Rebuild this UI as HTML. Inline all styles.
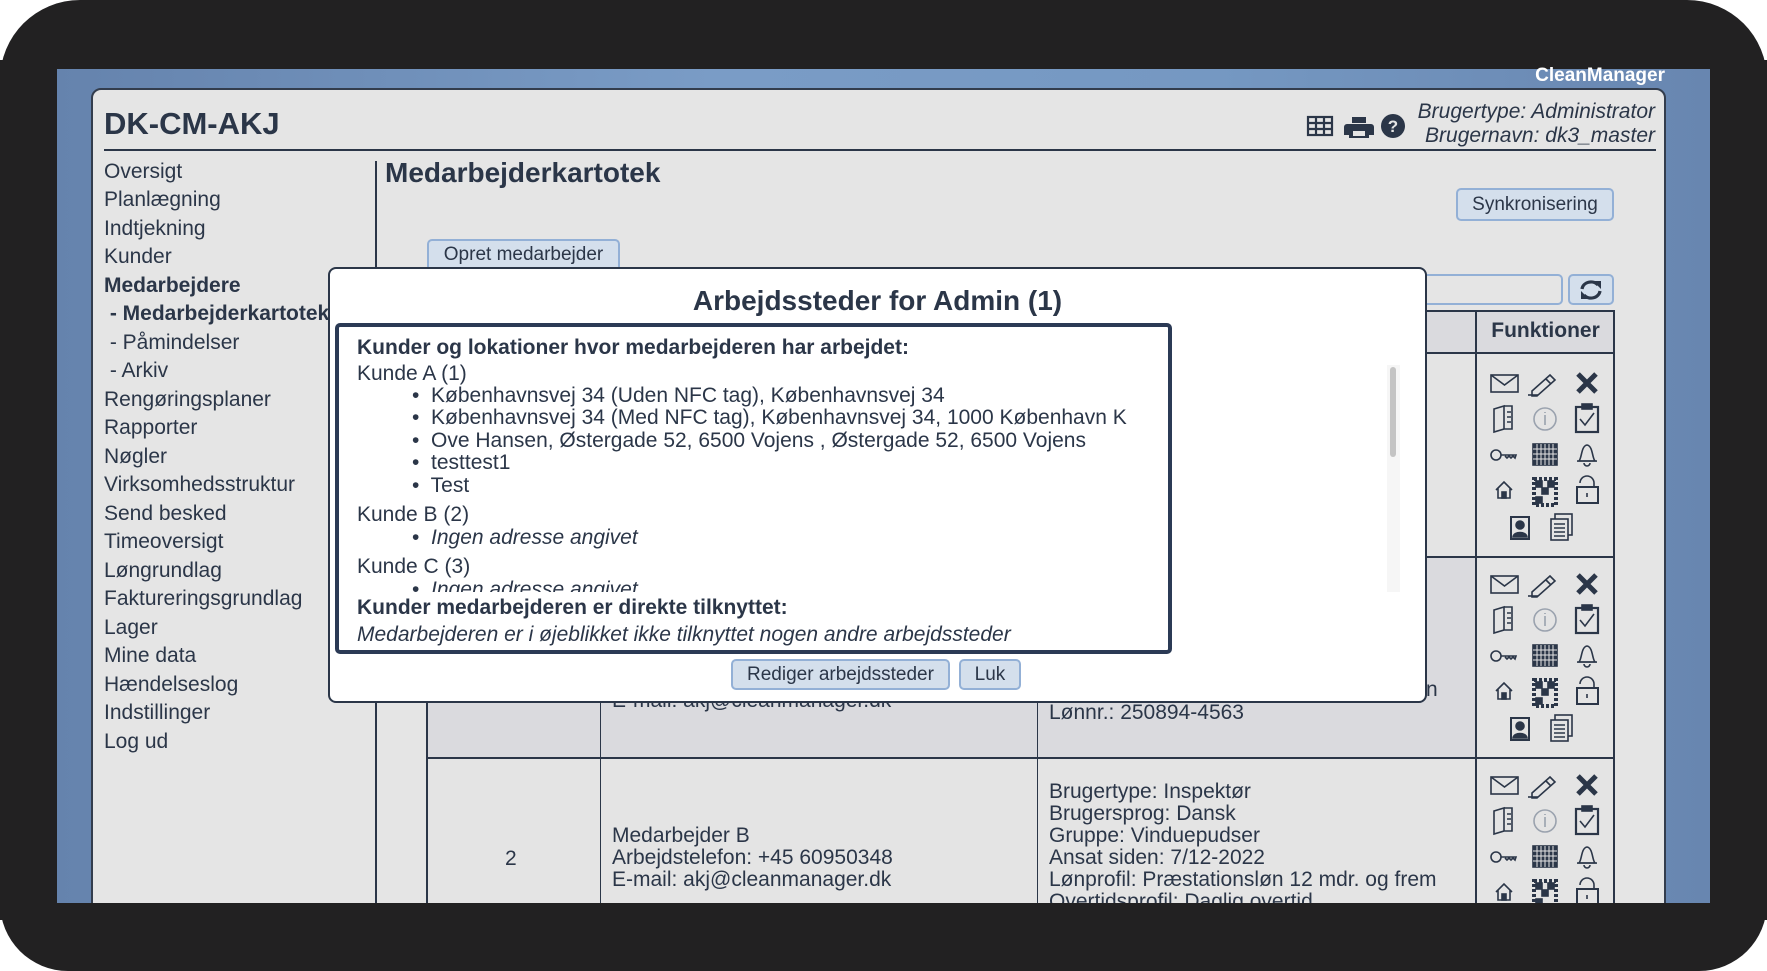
<!DOCTYPE html>
<html><head><meta charset="utf-8"><style>
*{margin:0;padding:0;box-sizing:border-box}
body{width:1767px;height:971px;background:#fff;overflow:hidden;font-family:"Liberation Sans",sans-serif;color:#2b3648;position:relative}
.frame{position:absolute;left:0;top:0;width:1767px;height:971px;background:#222122;border-radius:80px}
.blue{position:absolute;left:57px;top:69px;width:1653px;height:834px;background:linear-gradient(90deg,#6583ad 0%,#7a9cc6 40%,#7598c2 70%,#6886b0 100%);overflow:hidden}
.abs{position:absolute}
.panel{position:absolute;left:34px;top:19px;width:1575px;height:900px;background:#e5e5e5;border:2px solid #333d4d;border-radius:10px 10px 0 0}
.side div{position:absolute;left:104px;font-size:21px;white-space:nowrap}
.btn{position:absolute;background:#d4dfec;border:2px solid #93b0d6;border-radius:5px;font-size:19px;text-align:center;color:#2b3648}
.t{position:absolute;font-size:21px;white-space:nowrap}
</style></head><body>
<div class="frame"></div>
<div class="blue">
 <div class="panel"></div>
</div>
<div class="abs" style="right:102px;top:65px;font-size:19px;font-weight:bold;color:#fff">CleanManager</div>
<div class="abs" style="left:104px;top:106px;font-size:31px;font-weight:bold">DK-CM-AKJ</div>
<div class="abs" style="left:104px;top:149px;width:1552px;height:2px;background:#2b3648"></div>
<svg class="abs" style="left:1306px;top:113px" width="104" height="26" viewBox="0 0 104 26">
 <g fill="none" stroke="#2b3648" stroke-width="2.2"><rect x="2" y="4" width="24" height="18"/><path d="M2 10H26M2 16H26M10 4V22M18 4V22"/></g>
 <path d="M46 4h14v6h-14z M41 11h24a3 3 0 0 1 3 3v8h-5v3h-20v-3h-5v-8a3 3 0 0 1 3-3z" fill="#2b3648"/><rect x="47" y="18" width="12" height="5" fill="#e5e5e5"/>
 <circle cx="87" cy="13" r="12" fill="#2b3648"/><text x="87" y="19" font-size="17" font-weight="bold" fill="#e5e5e5" text-anchor="middle" font-family="Liberation Sans">?</text>
</svg>
<div class="abs" style="right:112px;top:100px;font-size:21px;font-style:italic;text-align:right;line-height:24px">Brugertype: Administrator<br>Brugernavn: dk3_master</div>
<div class="abs" style="left:375px;top:161px;width:2px;height:742px;background:#2b3648"></div>
<div class="side">
<div style="top:160px">Oversigt</div>
<div style="top:188px">Planlægning</div>
<div style="top:217px">Indtjekning</div>
<div style="top:245px">Kunder</div>
<div style="top:274px;font-weight:bold">Medarbejdere</div>
<div style="top:302px;font-weight:bold">&nbsp;- Medarbejderkartotek</div>
<div style="top:331px">&nbsp;- Påmindelser</div>
<div style="top:359px">&nbsp;- Arkiv</div>
<div style="top:388px">Rengøringsplaner</div>
<div style="top:416px">Rapporter</div>
<div style="top:445px">Nøgler</div>
<div style="top:473px">Virksomhedsstruktur</div>
<div style="top:502px">Send besked</div>
<div style="top:530px">Timeoversigt</div>
<div style="top:559px">Løngrundlag</div>
<div style="top:587px">Faktureringsgrundlag</div>
<div style="top:616px">Lager</div>
<div style="top:644px">Mine data</div>
<div style="top:673px">Hændelseslog</div>
<div style="top:701px">Indstillinger</div>
<div style="top:730px">Log ud</div>
</div>
<div class="abs" style="left:385px;top:157px;font-size:28px;font-weight:bold">Medarbejderkartotek</div>
<div class="btn" style="left:1456px;top:188px;width:158px;height:33px;line-height:29px">Synkronisering</div>
<div class="btn" style="left:427px;top:239px;width:193px;height:34px;line-height:28px">Opret medarbejder</div>
<div class="abs" style="left:1400px;top:274px;width:163px;height:31px;background:#e5e5e5;border:2px solid #93b0d6;border-radius:5px"></div>
<div class="btn" style="left:1568px;top:274px;width:46px;height:31px"><svg width="26" height="24" viewBox="0 0 26 24" style="margin-top:2px"><g fill="none" stroke="#2b3648" stroke-width="3.2"><path d="M4 11a9 8 0 0 1 16-4"/><path d="M22 13a9 8 0 0 1-16 4"/></g><path d="M15 3h8v8z M11 21h-8v-8z" fill="#2b3648"/></svg></div>
<div class="abs" style="left:426px;top:310px;width:1189px;height:600px;border:2px solid #2b3648;background:#e4e4e4"></div>
<div class="abs" style="left:428px;top:312px;width:1185px;height:41px;background:#dadade"></div>
<div class="abs" style="left:428px;top:557px;width:1048px;height:201px;background:#dadade"></div>
<div class="abs" style="left:426px;top:352px;width:1189px;height:2px;background:#2b3648"></div>
<div class="abs" style="left:426px;top:556px;width:1189px;height:2px;background:#2b3648"></div>
<div class="abs" style="left:426px;top:757px;width:1189px;height:2px;background:#2b3648"></div>
<div class="abs" style="left:600px;top:310px;width:1px;height:600px;background:#2b3648"></div>
<div class="abs" style="left:1037px;top:310px;width:1px;height:600px;background:#2b3648"></div>
<div class="abs" style="left:1475px;top:310px;width:2px;height:600px;background:#2b3648"></div>
<div class="abs" style="left:1476px;top:319px;width:139px;text-align:center;font-size:21px;font-weight:bold">Funktioner</div>
<div class="t" style="left:612px;top:689px">E-mail: akj@cleanmanager.dk</div>
<div class="t" style="left:1049px;top:701px">Lønnr.: 250894-4563</div>
<div class="t" style="left:1426px;top:678px">n</div>
<div class="t" style="left:505px;top:847px">2</div>
<div class="t" style="left:612px;top:825px;line-height:22px">Medarbejder B<br>Arbejdstelefon: +45 60950348<br>E-mail: akj@cleanmanager.dk</div>
<div class="t" style="left:1049px;top:781px;line-height:22px">Brugertype: Inspektør<br>Brugersprog: Dansk<br>Gruppe: Vinduepudser<br>Ansat siden: 7/12-2022<br>Lønprofil: Præstationsløn 12 mdr. og frem<br>Overtidsprofil: Daglig overtid</div>
<svg width="0" height="0" style="position:absolute"><defs>
<g id="ig" fill="none" stroke="#2b3648" stroke-width="1.6">
 <rect x="15" y="20" width="27" height="17"/><path d="M15 20l13.5 10 13.5-10"/>
 <path d="M56 36l18-16 5 5-18 16h-5z M70 24l5 5"/><path d="M52 40h10"/>
 <path d="M102 19l18 18M120 19l-18 18" stroke-width="5"/>
 <path d="M18 54l10-3v23l-10 3z M28 51h8v23h-8 M31 57h4M31 62h4M31 67h4"/>
 <circle cx="69" cy="64" r="11" stroke="#9aa2ae"/><path d="M69 60v10M69 57v1" stroke="#9aa2ae"/>
 <rect x="100" y="52" width="22" height="25" stroke-width="2.2"/><rect x="106" y="49" width="10" height="5" fill="#2b3648"/><path d="M104 64l5 6 9-12"/>
 <circle cx="20" cy="100" r="5"/><path d="M25 100h15l-1 3-2-2-2 2-2-2-2 2-2-2"/>
 <rect x="57" y="89" width="24" height="21" fill="#2b3648"/><path d="M57 94h24M57 99h24M57 104h24M61 89v21M65 89v21M69 89v21M73 89v21M77 89v21" stroke="#e4e4e4" stroke-width="1"/>
 <path d="M103 106c3-3 2-15 8-16 6 1 5 13 8 16z M108 108a3 3 0 0 0 6 0"/><path d="M101 106h20"/>
 <path d="M20 135l8-8 8 8M22 133v10h12v-10"/><rect x="26" y="137" width="4" height="6" fill="#2b3648"/>
 <rect x="58" y="124" width="22" height="26" fill="none" stroke-dasharray="3 2" stroke-width="4"/><rect x="60" y="126" width="6" height="6" fill="#2b3648"/><rect x="72" y="126" width="6" height="6" fill="#2b3648"/><rect x="60" y="142" width="6" height="6" fill="#2b3648"/><rect x="66" y="133" width="6" height="6" fill="#2b3648"/>
 <path d="M104 128a7 7 0 0 1 14 0v4"/><rect x="101" y="132" width="21" height="16" stroke-width="2"/><path d="M111 138v4"/>
 <rect x="35" y="162" width="18" height="22" stroke-width="2"/><circle cx="44" cy="170" r="4" fill="#2b3648"/><path d="M37 182c1-6 13-6 14 0z" fill="#2b3648"/>
 <rect x="79" y="159" width="17" height="21"/><rect x="75" y="164" width="17" height="21" fill="#e4e4e4"/><path d="M78 169h11M78 173h11M78 177h11M78 181h11"/>
</g></defs></svg>
<svg class="abs" style="left:1476px;top:355px" width="139" height="200"><use href="#ig"/></svg>
<svg class="abs" style="left:1476px;top:556px" width="139" height="200"><use href="#ig"/></svg>
<svg class="abs" style="left:1476px;top:757px" width="139" height="146"><use href="#ig"/></svg>
<div class="abs" style="left:0;top:903px;width:1767px;height:68px;background:#222122;border-radius:0 0 80px 80px"></div>
<div class="abs" style="left:1710px;top:60px;width:57px;height:860px;background:#222122"></div>
<div class="abs" style="left:0;top:60px;width:57px;height:860px;background:#222122"></div>
<div class="abs" style="left:328px;top:267px;width:1099px;height:436px;background:#fff;border:2px solid #2b3648;border-radius:8px"></div>
<div class="abs" style="left:328px;top:285px;width:1099px;text-align:center;font-size:28px;font-weight:bold">Arbejdssteder for Admin (1)</div>
<div class="abs" style="left:335px;top:323px;width:837px;height:331px;border:4px solid #2b3a55;border-radius:5px"></div>
<div class="t" style="left:357px;top:336px;font-weight:bold">Kunder og lokationer hvor medarbejderen har arbejdet:</div>
<div class="abs" style="left:340px;top:363px;width:1060px;height:229px;overflow:hidden">
 <div class="t" style="left:17px;top:0px;line-height:22px">Kunde A (1)</div>
 <div class="t" style="left:72px;top:22px;line-height:22.4px">•&nbsp; Københavnsvej 34 (Uden NFC tag), Københavnsvej 34<br>•&nbsp; Københavnsvej 34 (Med NFC tag), Københavnsvej 34, 1000 København K<br>•&nbsp; Ove Hansen, Østergade 52, 6500 Vojens , Østergade 52, 6500 Vojens<br>•&nbsp; testtest1<br>•&nbsp; Test</div>
 <div class="t" style="left:17px;top:140px">Kunde B (2)</div>
 <div class="t" style="left:72px;top:163px">•&nbsp; <i>Ingen adresse angivet</i></div>
 <div class="t" style="left:17px;top:192px">Kunde C (3)</div>
 <div class="t" style="left:72px;top:215px">•&nbsp; <i>Ingen adresse angivet</i></div>
 <div class="abs" style="left:1047px;top:2px;width:13px;height:227px;background:#f6f6f6"></div>
 <div class="abs" style="left:1050px;top:4px;width:6px;height:90px;background:#c4c4c4;border-radius:3px"></div>
</div>
<div class="t" style="left:357px;top:596px;font-weight:bold">Kunder medarbejderen er direkte tilknyttet:</div>
<div class="t" style="left:357px;top:623px;font-style:italic">Medarbejderen er i øjeblikket ikke tilknyttet nogen andre arbejdssteder</div>
<div class="btn" style="left:731px;top:659px;width:219px;height:31px;line-height:27px">Rediger arbejdssteder</div>
<div class="btn" style="left:959px;top:659px;width:62px;height:31px;line-height:27px">Luk</div>
</body></html>
